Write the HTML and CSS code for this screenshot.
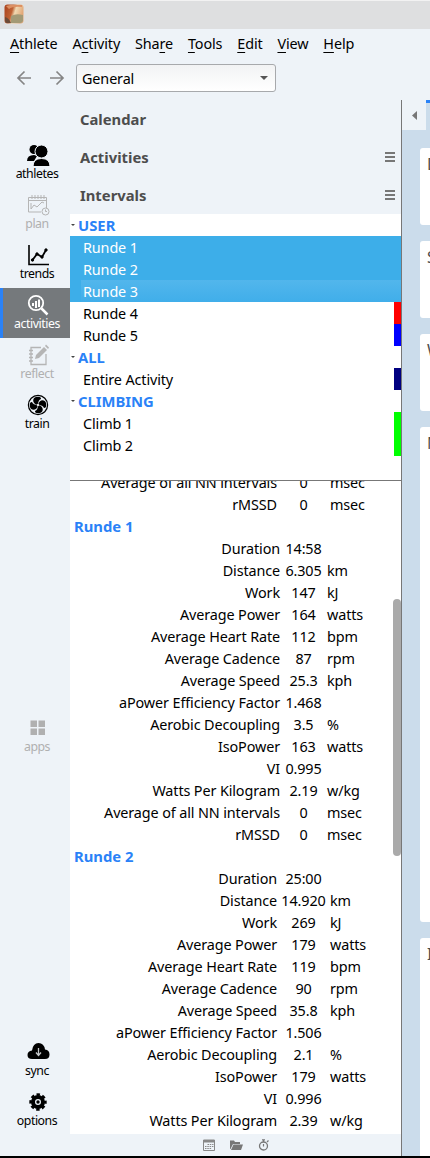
FILE: index.html
```html
<!DOCTYPE html>
<html lang="en">
<head>
<meta charset="utf-8">
<title>Activities</title>
<link rel="stylesheet" href="styles.css">
</head>
<body>
<div class="window">
  <header class="titlebar">
    <svg class="app-icon" width="20" height="20" viewBox="0 0 20 20"><defs><linearGradient id="ph" x2="1" y2=".3"><stop offset="0" stop-color="#a8401c"/><stop offset=".45" stop-color="#bf6234"/><stop offset=".62" stop-color="#f0d9b2"/><stop offset="1" stop-color="#e2a878"/></linearGradient></defs><rect x=".5" y=".5" width="19" height="19" rx="3" fill="url(#ph)"/><path d="M2 2Q8 0 18 1V3Q9 2 5 5z" fill="#dc8f62"/><path d="M7 12Q12 9 19 11V17Q18 19 16 19H7z" fill="#a39a76"/><path d="M1 13Q5 14 7 19H3Q1 19 1 16z" fill="#6b4a38"/></svg>
  </header>
  <nav class="menubar"><span><u>A</u>thlete</span><span>A<u>c</u>tivity</span><span>Sha<u>r</u>e</span><span><u>T</u>ools</span><span><u>E</u>dit</span><span><u>V</u>iew</span><span><u>H</u>elp</span></nav>
  <div class="toolbar">
    <svg width="16" height="16" viewBox="0 0 16 16" class="arrow"><path d="M15 8H2M8.500 1.500L2 8l6.500 6.500"/></svg>
    <svg width="16" height="16" viewBox="0 0 16 16" class="arrow"><path d="M1 8h13M7.500 1.500L14 8l-6.500 6.500"/></svg>
    <div class="select"><span>General</span><svg width="8" height="4"><path d="M0 0h8L4 4z" fill="#555"/></svg></div>
  </div>
  <div class="main">
    <aside class="rail">
      <div class="item"><svg width="24" height="24" viewBox="0 0 24 24"><circle cx="8" cy="6.500" r="4.500"/><path d="M1 18Q1 12 8 12l3 1-3 5z"/><circle cx="15.500" cy="8.500" r="6.500" stroke="#eef3f8"/><path d="M7 23.500Q7 15.500 15.500 15.500T24 23.500z" stroke="#eef3f8"/></svg><span>athletes</span></div>
      <div class="item off"><svg width="24" height="24" viewBox="0 0 24 24" class="line"><path d="M15 19H2.500V4.500h18V15M2.500 7.500h18M6 2v4M9 2v4M12 2v4M15 2v4M18 2v4M5 16l3-4 3 2 5-5 2 1M5 10v6"/><circle cx="19.500" cy="18.500" r="3.500"/><path d="M19.500 16.500v2h1.500"/></svg><span>plan</span></div>
      <div class="item"><svg width="24" height="24" viewBox="0 0 24 24" class="line"><path d="M3 2v19.500h20" stroke-width="1.600"/><path d="M6.500 17l4.500-6 5 3 4-7" stroke-width="1.800"/><g fill="#000"><circle cx="6.500" cy="17" r="1.200"/><circle cx="11" cy="11" r="1.200"/><circle cx="16" cy="14" r="1.200"/><circle cx="20" cy="7" r="1.200"/></g></svg><span>trends</span></div>
      <div class="item on"><svg width="24" height="24" viewBox="0 0 24 24" class="line"><circle cx="10" cy="10" r="7.200" stroke-width="1.800"/><path d="M15.500 15.500L21.500 21.500" stroke-width="2.500"/><path d="M7 13v-3M10 15V8M13 14V6.500" stroke-width="2"/></svg><span>activities</span></div>
      <div class="item off"><svg width="24" height="24" viewBox="0 0 24 24" class="line"><path d="M15 4.500H5V21.500h15V11M3 7.500h4M3 11h4M3 14.500h4M3 18h4" stroke-width="1.300"/><path d="M9 16l1-4L18 4l3 3-8 8z" fill="#b5b5b5" stroke="none"/><path d="M19 3l1-1.500 3 3L22 6z" fill="#b5b5b5" stroke="none"/></svg><span>reflect</span></div>
      <div class="item"><svg width="24" height="24" viewBox="0 0 24 24"><circle cx="12" cy="12" r="9.600" fill="none" stroke="#000" stroke-width="1.200"/><path id="blade" d="M12 12C6 11 6 5 10 4Q15 3 15 6Q12 7 12 12z"/><use href="#blade" transform="rotate(90 12 12)"/><use href="#blade" transform="rotate(180 12 12)"/><use href="#blade" transform="rotate(270 12 12)"/><circle cx="12" cy="12" r="1.300" fill="#ddd"/></svg><span>train</span></div>
      <div class="item off apps"><svg width="24" height="24" viewBox="0 0 24 24"><path d="M4.500 4.500h6.500v6.500H4.500zM12.500 4.500h6.500v6.500h-6.500zM4.500 12.500h6.500v6.500H4.500zM12.500 12.500h6.500v6.500h-6.500z" fill="#b0b0b0"/></svg><span>apps</span></div>
      <div class="item sync"><svg width="24" height="24" viewBox="0 0 24 24"><path d="M6 19Q1.500 19 1.500 15T6 10.500Q7 3 12.500 3T19 9.500Q23.500 10 23.500 14.500T19 19z"/><path d="M12.500 8v7M10 12.500l2.500 3 2.500-3" fill="none" stroke="#c5c8ca" stroke-width="1.300"/></svg><span>sync</span></div>
      <div class="item"><svg width="24" height="24" viewBox="0 0 24 24"><circle cx="12" cy="12" r="5" fill="none" stroke="#000" stroke-width="4"/><circle cx="12" cy="12" r="7.200" fill="none" stroke="#000" stroke-width="3" stroke-dasharray="3.300 2.355" stroke-dashoffset="1.650"/><circle cx="12" cy="12" r="1.700"/></svg><span>options</span></div>
    </aside>
    <section class="sidebar">
      <h2>Calendar</h2>
      <h2>Activities<i class="burger"></i></h2>
      <h2>Intervals<i class="burger"></i></h2>
      <div class="tree">
        <div class="group">USER</div>
        <div class="row sel">Runde 1</div><div class="row sel">Runde 2</div><div class="row sel current">Runde 3</div>
        <div class="row red">Runde 4</div><div class="row blue">Runde 5</div>
        <div class="group">ALL</div>
        <div class="row navy">Entire Activity</div>
        <div class="group">CLIMBING</div>
        <div class="row lime">Climb 1</div><div class="row lime">Climb 2</div>
      </div>
      <div class="stats">
        <div class="scroll">
          <div class="stat"><span>Average of all NN intervals</span><b>0</b><span>msec</span></div>
          <div class="stat"><span>rMSSD</span><b>0</b><span>msec</span></div>
          <h3>Runde 1</h3>
          <div class="narrow">
          <div class="stat"><span>Duration</span><b>14:58</b></div>
          <div class="stat"><span>Distance</span><b>6.305</b><span>km</span></div>
          <div class="stat"><span>Work</span><b>147</b><span>kJ</span></div>
          <div class="stat"><span>Average Power</span><b>164</b><span>watts</span></div>
          <div class="stat"><span>Average Heart Rate</span><b>112</b><span>bpm</span></div>
          <div class="stat"><span>Average Cadence</span><b>87</b><span>rpm</span></div>
          <div class="stat"><span>Average Speed</span><b>25.3</b><span>kph</span></div>
          <div class="stat"><span>aPower Efficiency Factor</span><b>1.468</b></div>
          <div class="stat"><span>Aerobic Decoupling</span><b>3.5</b><span>%</span></div>
          <div class="stat"><span>IsoPower</span><b>163</b><span>watts</span></div>
          <div class="stat"><span>VI</span><b>0.995</b></div>
          <div class="stat"><span>Watts Per Kilogram</span><b>2.19</b><span>w/kg</span></div>
          <div class="stat"><span>Average of all NN intervals</span><b>0</b><span>msec</span></div>
          <div class="stat"><span>rMSSD</span><b>0</b><span>msec</span></div>
          </div>
          <h3>Runde 2</h3>
          <div class="stat"><span>Duration</span><b>25:00</b></div>
          <div class="stat"><span>Distance</span><b>14.920</b><span>km</span></div>
          <div class="stat"><span>Work</span><b>269</b><span>kJ</span></div>
          <div class="stat"><span>Average Power</span><b>179</b><span>watts</span></div>
          <div class="stat"><span>Average Heart Rate</span><b>119</b><span>bpm</span></div>
          <div class="stat"><span>Average Cadence</span><b>90</b><span>rpm</span></div>
          <div class="stat"><span>Average Speed</span><b>35.8</b><span>kph</span></div>
          <div class="stat"><span>aPower Efficiency Factor</span><b>1.506</b></div>
          <div class="stat"><span>Aerobic Decoupling</span><b>2.1</b><span>%</span></div>
          <div class="stat"><span>IsoPower</span><b>179</b><span>watts</span></div>
          <div class="stat"><span>VI</span><b>0.996</b></div>
          <div class="stat"><span>Watts Per Kilogram</span><b>2.39</b><span>w/kg</span></div>
        </div>
        <div class="thumb"></div>
      </div>
      <footer class="foot">
        <svg width="12" height="12" viewBox="0 0 12 12"><path d="M.5 1h11v10.500H.5z" fill="none" stroke="#888"/><path d="M0 1h12v2.500H0z" fill="#888"/><path d="M4.500 5.500h6M2 7.500h8.500M2 9.500h6.500" stroke="#888" stroke-width="1.200" stroke-dasharray="1.500 .8"/></svg>
        <svg width="13" height="12" viewBox="0 0 13 12"><path d="M0 10V1.500h4l1 1.500h5v2H3L.5 10z" fill="#777"/><path d="M3.500 5.500H13L11 11H1z" fill="#777"/></svg>
        <svg width="12" height="12" viewBox="0 0 12 12"><circle cx="5.500" cy="7" r="4" fill="none" stroke="#777" stroke-width="1.300"/><path d="M4 .8h3M5.500 1v2M5.500 5v2.500M9 3l1.500-1.500" stroke="#777" stroke-width="1.200"/></svg>
      </footer>
    </section>
    <section class="content">
      <div class="tabs"><div class="collapse"><svg width="5" height="9"><path d="M5 0v9L0 4.500z" fill="#777"/></svg></div><div class="tab"></div></div>
      <div class="card">D</div><div class="card">S</div><div class="card">W</div><div class="card tall">M</div><div class="card last">I</div>
    </section>
  </div>
</div>
</body>
</html>
```
FILE: styles.css
```css
* { box-sizing: border-box; }
body { margin: 0; background: #eef3f8; color: #000; font: 14.4px/22px "Noto Sans", sans-serif; letter-spacing: -0.12px; }
.window { height: 1158px; display: flex; flex-direction: column; overflow: hidden; border-bottom: 2px solid #000; }
.titlebar { height: 29px; background: #dedfe0; border-top: 1px solid #f2f2f2; padding: 3px 4px; flex: none; }
.app-icon { display: block; }
.menubar { height: 30px; flex: none; display: flex; gap: 14.900px; padding: 4px 0 0 10px; white-space: nowrap; }
.menubar u { text-underline-offset: 3px; text-decoration-thickness: 1px; text-decoration-skip-ink: none; }
.toolbar { height: 41px; flex: none; display: flex; padding: 5px 0 0 16px; }
.arrow { margin: 6px 17px 0 0; fill: none; stroke: #858585; stroke-width: 1.700; }
.select { margin-left: -6px; width: 200px; height: 28px; border: 1px solid #a7a9ac; border-radius: 3px; background: linear-gradient(#f2f3f4, #fff); display: flex; align-items: center; justify-content: space-between; padding: 0 7px 0 5px; }
.select span { padding-top: 2px; }
.main { flex: 1; min-height: 0; display: grid; grid-template-columns: 70px 332px 28px; }
.rail { display: flex; flex-direction: column; padding: 38px 0 21px; }
.item { height: 50px; flex: none; display: flex; flex-direction: column; align-items: center; padding: 5px 0 0 4px; font-size: 12.300px; line-height: 16px; letter-spacing: -0.45px; }
.item svg { display: block; margin-left: 2px; }
.item span { margin-top: -1px; }
.line { fill: none; stroke: #000; }
.off { color: #b0b0b0; }
.off .line { stroke: #b5b5b5; }
.on { background: #75797c; border-left: 3px solid #2a82f7; padding-left: 1px; color: #fff; }
.on .line { stroke: #fff; }
.apps { margin-top: 273px; }
.sync { margin-top: auto; }
.sidebar { border-right: 1px solid #777; display: flex; flex-direction: column; min-height: 0; }
h2 { margin: 0; height: 38px; padding: 0 6px 0 10px; display: flex; justify-content: space-between; align-items: center; font-size: 14.8px; letter-spacing: 0; color: #4d4d4d; flex: none; }
.burger { width: 10px; height: 10px; background: repeating-linear-gradient(#777 0 2px, transparent 2px 4px); }
.tree { height: 267px; flex: none; background: #fff; border-bottom: 1px solid #777; }
.group { height: 22px; color: #2a82f7; font-size: 14.8px; letter-spacing: 0; font-weight: bold; display: flex; align-items: center; gap: 3px; }
.group::before { content: ""; border: 2px solid transparent; border-top: 2px solid #444; border-bottom: 0; margin-left: 1px; }
.row { height: 22px; padding: 1px 0 0 13px; border-right: 7px solid transparent; }
.sel { background: #3daee9; color: #fff; border: 0; }
.current { background: linear-gradient(#52b6ec, #40aeea) 11px 0 no-repeat #3daee9; }
.red { border-color: #f00; }
.blue { border-color: #00f; }
.navy { border-color: navy; }
.lime { border-color: #0f0; }
.stats { flex: 1; min-height: 0; display: flex; background: #fff; overflow: hidden; }
.scroll { width: 323px; margin-top: -10px; }
h3 { margin: 0; padding-left: 4px; font-size: 14.8px; letter-spacing: 0; line-height: 22px; color: #2a82f7; }
.stat { display: grid; grid-template-columns: 207px 53px 60px; height: 22px; padding-top: 1px; white-space: nowrap; }
.narrow .stat { grid-template-columns: 210px 47px 60px; }
.stat span:first-child { text-align: right; }
.stat b { font-weight: normal; text-align: center; }
.thumb { width: 8px; height: 257px; margin-top: 118px; background: #aaa; border-radius: 4px; }
.foot { height: 22px; flex: none; display: flex; gap: 15px; padding: 5px 0 0 133px; }
.content { background: #cbdceb; overflow: hidden; }
.tabs { display: flex; height: 48px; }
.collapse { width: 24px; height: 30px; background: #eef3f8; display: flex; align-items: center; justify-content: center; }
.tab { height: 3px; width: 4px; background: #2a82f7; }
.card { margin: 0 0 16px 18px; height: 77px; background: #fff; border-radius: 3px 0 0 3px; padding: 5px 0 0 7px; font-size: 16px; color: #4d4d4d; overflow: hidden; width: 10px; }
.tall { height: 495px; }
.last { height: 220px; }
```
